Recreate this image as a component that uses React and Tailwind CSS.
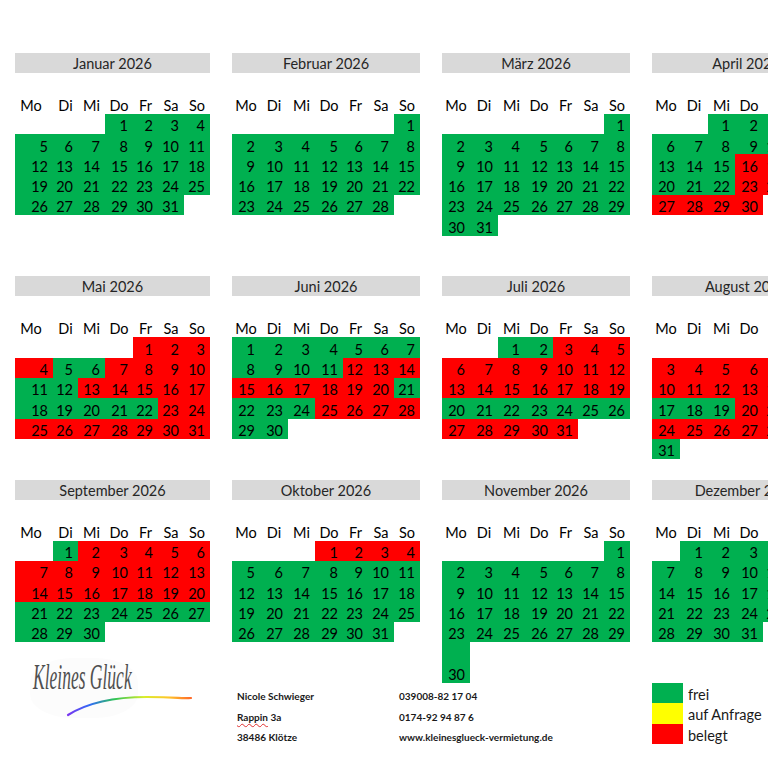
import React from "react";

const range = (a, b) => Array.from({ length: b - a + 1 }, (_, i) => a + i);

const MONTHS = [
  { name: "Januar 2026", first: 3, days: 31, red: [] },
  { name: "Februar 2026", first: 6, days: 28, red: [] },
  { name: "März 2026", first: 6, days: 31, red: [] },
  { name: "April 2026", first: 2, days: 30, red: [...range(16, 19), ...range(23, 30)] },
  { name: "Mai 2026", first: 4, days: 31, red: [1, 2, 3, 4, 7, 8, 9, 10, 13, 14, 15, 16, 17, 23, 24, ...range(25, 31)] },
  { name: "Juni 2026", first: 0, days: 30, red: [...range(12, 20), ...range(25, 28)] },
  { name: "Juli 2026", first: 2, days: 31, red: [...range(3, 19), ...range(27, 31)] },
  { name: "August 2026", first: 5, days: 31, red: [...range(1, 16), ...range(20, 30)] },
  { name: "September 2026", first: 1, days: 30, red: range(2, 20) },
  { name: "Oktober 2026", first: 3, days: 31, red: [1, 2, 3, 4] },
  { name: "November 2026", first: 6, days: 30, red: [] },
  { name: "Dezember 2026", first: 1, days: 31, red: [] },
];

const WD = ["Mo", "Di", "Mi", "Do", "Fr", "Sa", "So"];

function buildWeeks(m) {
  const cells = [];
  for (let i = 0; i < m.first; i++) cells.push(null);
  for (let d = 1; d <= m.days; d++) cells.push(d);
  while (cells.length % 7) cells.push(null);
  const weeks = [];
  for (let i = 0; i < cells.length; i += 7) weeks.push(cells.slice(i, i + 7));
  return weeks;
}

function WeekRow({ week, m, grid, tall }) {
  return (
    <div className={`grid ${grid} ${tall ? "h-[40.66px]" : "h-[20.33px]"}`}>
      {week.map((d, i) => (
        <div
          key={i}
          className={`overflow-hidden text-right pr-[5px] leading-[20.33px] ${tall ? "pt-[22.8px]" : "pt-[2.5px]"} ${
            d == null ? "bg-white" : m.red.includes(d) ? "bg-[#ff0000]" : "bg-[#00b050]"
          }`}
        >
          {d ?? ""}
        </div>
      ))}
    </div>
  );
}

function Month({ m, first, rows, tallLast }) {
  const grid = first
    ? "grid-cols-[38px_25px_27px_28px_25px_26px_26px] w-[195px]"
    : "grid-cols-[28px_28px_27px_28px_25px_26px_26px] w-[188px]";
  const weeks = buildWeeks(m);
  const empty = [null, null, null, null, null, null, null];
  const normal = [];
  for (let i = 0; i < rows; i++) normal.push(weeks[i] || empty);
  return (
    <div className={`flex flex-col ${first ? "w-[195px]" : "w-[188px]"}`}>
      <div className="h-[20px] mb-[0.33px] overflow-hidden bg-[#d9d9d9] text-center pt-[1px] leading-[20px] text-[#262626] whitespace-nowrap">
        {m.name}
      </div>
      <div className="h-[20.33px]" />
      <div className={`grid ${grid} h-[20.33px] leading-[20.33px]`}>
        {WD.map((w, i) => (
          <div key={w} className={`h-[20.33px] overflow-hidden pt-[2.5px] text-center ${first && i === 0 ? "pr-[6px]" : ""}`}>
            {w}
          </div>
        ))}
      </div>
      {normal.map((w, i) => (
        <WeekRow key={i} week={w} m={m} grid={grid} />
      ))}
      {tallLast && <WeekRow week={weeks[rows] || empty} m={m} grid={grid} tall />}
    </div>
  );
}

function Section({ months, rows, tallLast, className }) {
  return (
    <div className={`flex gap-[22px] ${className || ""}`}>
      {months.map((m, i) => (
        <Month key={m.name} m={m} first={i === 0} rows={rows} tallLast={tallLast} />
      ))}
    </div>
  );
}

function Logo() {
  return (
    <div className="relative w-[195px] h-[70px] -mt-[30px]">
      <div className="absolute left-[15px] top-[5px] w-[108px] h-[60px] rounded-[40%] bg-[#fcfcfc]" />
      <div className="absolute left-[18px] top-[6px] origin-top-left scale-x-[0.7] scale-y-[1.45] whitespace-nowrap font-['Liberation_Serif',serif] italic text-[25px] leading-[26px] text-[#505050]">
        Kleines Glück
      </div>
      <svg className="absolute left-0 top-0" width="195" height="70" viewBox="0 0 195 70">
        <defs>
          <linearGradient id="rb" x1="53" y1="0" x2="176" y2="0" gradientUnits="userSpaceOnUse">
            <stop offset="0" stopColor="#7a35f0" />
            <stop offset="0.18" stopColor="#2f6cf5" />
            <stop offset="0.38" stopColor="#2fc455" />
            <stop offset="0.62" stopColor="#d9ee2a" />
            <stop offset="0.82" stopColor="#ffc52a" />
            <stop offset="1" stopColor="#ff6a2a" />
          </linearGradient>
        </defs>
        <path
          d="M53 62 C 72 50, 100 44, 132 44 S 165 46, 176 45"
          fill="none"
          stroke="url(#rb)"
          strokeWidth="2.2"
          strokeLinecap="round"
        />
      </svg>
    </div>
  );
}

function InfoRow({ children }) {
  return <div className="h-[20.33px] flex items-end pb-[2px] leading-none">{children}</div>;
}

function LegendRow({ color, label }) {
  return (
    <div className="flex h-[20.33px]">
      <div className={`w-[31px] h-full ${color}`} />
      <div className="ml-[5px] h-[20.33px] overflow-hidden pt-[2px] leading-[20.33px] text-[#1a1a1a] whitespace-nowrap">{label}</div>
    </div>
  );
}

export default function App() {
  return (
    <div className="w-[768px] h-[768px] overflow-hidden bg-white pt-[52.7px] pl-[15px] font-['Lato','Liberation_Sans',sans-serif] text-[14.5px] text-black">
      <Section months={MONTHS.slice(0, 4)} rows={6} className="mb-[40.66px]" />
      <Section months={MONTHS.slice(4, 8)} rows={6} className="mb-[20.33px]" />
      <Section months={MONTHS.slice(8, 12)} rows={5} tallLast />
      <div className="flex">
        <div className="w-[222px]">
          <Logo />
        </div>
        <div className="w-[162px] text-[10px] font-bold text-[#1a1a1a]">
          <InfoRow>Nicole Schwieger</InfoRow>
          <InfoRow>
            <span className="underline decoration-wavy decoration-[#e03030] decoration-[1px] underline-offset-[2px]">Rappin</span>
            &nbsp;3a
          </InfoRow>
          <InfoRow>38486 Klötze</InfoRow>
        </div>
        <div className="w-[253px] text-[10px] font-bold text-[#1a1a1a]">
          <InfoRow>039008-82 17 04</InfoRow>
          <InfoRow>0174-92 94 87 6</InfoRow>
          <InfoRow>www.kleinesglueck-vermietung.de</InfoRow>
        </div>
        <div className="flex flex-col">
          <LegendRow color="bg-[#00b050]" label="frei" />
          <LegendRow color="bg-[#ffff00]" label="auf Anfrage" />
          <LegendRow color="bg-[#ff0000]" label="belegt" />
        </div>
      </div>
    </div>
  );
}
